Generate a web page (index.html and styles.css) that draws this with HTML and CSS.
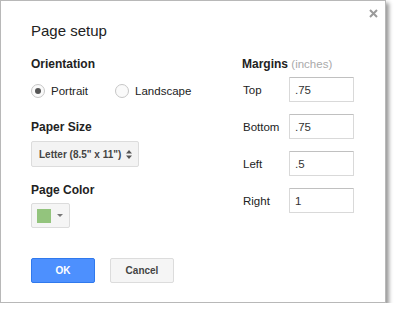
FILE: index.html
```html
<!DOCTYPE html>
<html lang="en">
<head>
    <meta charset="UTF-8">
    <title>Page setup</title>
    <link rel="stylesheet" href="styles.css">
</head>
<body>
    <div class="dialog">
        <button class="close-btn" aria-label="Close">
            <svg width="9" height="9" viewBox="0 0 9 9"><path d="M1 1L8 8M8 1L1 8" stroke="#9a9a9a" stroke-width="2"/></svg>
        </button>
        <div class="dialog-title">Page setup</div>

        <div class="dialog-body">
            <div class="left-col">
                <div class="heading">Orientation</div>
                <div class="radio-row">
                    <label class="radio-option"><span class="radio checked"></span>Portrait</label>
                    <label class="radio-option"><span class="radio"></span>Landscape</label>
                </div>

                <div class="heading paper-heading">Paper Size</div>
                <div class="select-box">
                    <span>Letter (8.5" x 11")</span>
                    <svg width="6" height="9" viewBox="0 0 6 9"><path d="M0 3.5L3 0L6 3.5Z M0 5.5L3 9L6 5.5Z" fill="#555"/></svg>
                </div>

                <div class="heading color-heading">Page Color</div>
                <div class="color-btn">
                    <span class="swatch"></span>
                    <svg width="6" height="3" viewBox="0 0 6 3"><path d="M0 0L6 0L3 3Z" fill="#777"/></svg>
                </div>
            </div>

            <div class="right-col">
                <div class="heading">Margins <span class="unit">(inches)</span></div>
                <div class="margin-list">
                    <div class="margin-row"><span class="margin-label">Top</span><input class="margin-input" value=".75"></div>
                    <div class="margin-row"><span class="margin-label">Bottom</span><input class="margin-input" value=".75"></div>
                    <div class="margin-row"><span class="margin-label">Left</span><input class="margin-input" value=".5"></div>
                    <div class="margin-row"><span class="margin-label">Right</span><input class="margin-input" value="1"></div>
                </div>
            </div>
        </div>

        <div class="dialog-buttons">
            <button class="btn btn-ok">OK</button>
            <button class="btn btn-cancel">Cancel</button>
        </div>
    </div>
</body>
</html>
```

FILE: styles.css
```css
body {
    margin: 0;
    background-color: white;
    font-family: "Liberation Sans", Arial, sans-serif;
    color: #222;
}
.dialog {
    position: relative;
    box-sizing: border-box;
    width: 386px;
    height: 303px;
    padding: 21px 30px 0;
    background-color: white;
    border: 1px solid #b8b8b8;
    box-shadow: 3px 3px 4px rgba(0,0,0,0.4);
}
.close-btn {
    position: absolute;
    top: 8px;
    right: 7px;
    padding: 0;
    border: none;
    background: none;
    line-height: 0;
    cursor: pointer;
}
.dialog-title {
    font-size: 15px;
    line-height: 17px;
    color: #222;
}
.dialog-body {
    display: grid;
    grid-template-columns: 211px 1fr;
    margin-top: 18px;
}
.heading {
    font-size: 12px;
    line-height: 14px;
    font-weight: bold;
    color: #222;
}
.unit {
    font-weight: normal;
    color: #aaa;
    font-size: 11.5px;
}
.radio-row {
    display: flex;
    gap: 27px;
    margin-top: 13px;
    font-size: 11.5px;
    line-height: 14px;
    color: #222;
}
.radio-option {
    display: flex;
    align-items: center;
    gap: 6px;
}
.radio {
    box-sizing: border-box;
    width: 14px;
    height: 14px;
    border: 1px solid #c6c6c6;
    border-radius: 50%;
    background-color: #fafafa;
    display: flex;
    align-items: center;
    justify-content: center;
}
.radio.checked::after {
    content: "";
    width: 6px;
    height: 6px;
    border-radius: 50%;
    background-color: #555;
}
.paper-heading {
    margin-top: 22px;
}
.select-box {
    box-sizing: border-box;
    width: 108px;
    height: 26px;
    margin-top: 7px;
    padding: 0 6px 0 7px;
    display: flex;
    align-items: center;
    justify-content: space-between;
    background-color: #f3f3f3;
    border: 1px solid #dcdcdc;
    border-radius: 2px;
    font-size: 10px;
    font-weight: bold;
    color: #444;
}
.color-heading {
    margin-top: 16px;
}
.color-btn {
    box-sizing: border-box;
    width: 39px;
    height: 25px;
    margin-top: 6px;
    padding: 0 6px 0 5px;
    display: flex;
    align-items: center;
    justify-content: space-between;
    background-color: #f5f5f5;
    border: 1px solid #dcdcdc;
    border-radius: 2px;
}
.swatch {
    width: 14px;
    height: 14px;
    background-color: #93c47d;
}
.margin-list {
    display: flex;
    flex-direction: column;
    gap: 12px;
    margin-top: 6px;
}
.margin-row {
    display: flex;
    align-items: center;
    font-size: 11.5px;
    color: #222;
}
.margin-label {
    width: 46px;
    padding-left: 1px;
}
.margin-input {
    box-sizing: border-box;
    width: 65px;
    height: 25px;
    padding: 0 5px;
    border: 1px solid #d9d9d9;
    border-top-color: #c0c0c0;
    border-radius: 1px;
    font-family: inherit;
    font-size: 11.5px;
    color: #333;
    outline: none;
}
.dialog-buttons {
    display: flex;
    gap: 15px;
    margin-top: 30px;
}
.btn {
    box-sizing: border-box;
    width: 64px;
    height: 25px;
    padding: 0;
    border-radius: 2px;
    font-family: inherit;
    font-size: 10px;
    font-weight: bold;
    cursor: pointer;
}
.btn-ok {
    background-color: #4d90fe;
    border: 1px solid #3079ed;
    color: white;
}
.btn-cancel {
    background-color: #f5f5f5;
    border: 1px solid #dcdcdc;
    color: #444;
}
```
